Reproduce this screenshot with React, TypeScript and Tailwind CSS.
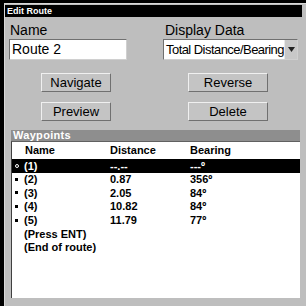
import React from 'react';

const rows = [
  { mark: 'o', name: '(1)', dist: '--.--', bear: '---º', sel: true },
  { mark: 'b', name: '(2)', dist: '0.87', bear: '356º' },
  { mark: 'b', name: '(3)', dist: '2.05', bear: '84º' },
  { mark: 'b', name: '(4)', dist: '10.82', bear: '84º' },
  { mark: 'b', name: '(5)', dist: '11.79', bear: '77º' },
  { mark: '', name: '(Press ENT)', dist: '', bear: '' },
  { mark: '', name: '(End of route)', dist: '', bear: '' },
];

const Btn = ({ label, w }: { label: string; w: string }) => (
  <div className={`${w} h-[19px] flex items-center justify-center bg-[#c4c4c4] border border-t-[#f0f0f0] border-l-[#f0f0f0] border-b-[#707070] border-r-[#707070] text-[13px] text-black`}>
    {label}
  </div>
);

export default function App() {
  return (
    <div className="w-[306px] h-[306px] bg-black pl-[4px] pt-[3px] overflow-hidden" style={{ fontFamily: '"Liberation Sans", Arial, sans-serif' }}>
      <div className="w-[302px] h-[303px] bg-[#bebebe] border-l border-t border-[#d8d8d8] flex flex-col">
        {/* title */}
        <div className="h-[12px] mt-[1px] mr-[4px] bg-black text-white text-[9px] font-bold leading-[12px] pl-[2px]">Edit Route</div>

        {/* name / display */}
        <div className="flex mt-[5px] pl-[4px]">
          <div className="flex flex-col w-[154px]">
            <div className="text-[14px] leading-[17px] pl-[1px]">Name</div>
            <div className="w-[118px] h-[21px] bg-white border border-[#707070] border-r-[#d0d0d0] border-b-[#d0d0d0] text-[14px] leading-[19px] pl-[2px]">Route 2</div>
          </div>
          <div className="flex flex-col">
            <div className="text-[14px] leading-[17px] pl-[2px]">Display Data</div>
            <div className="w-[135px] h-[21px] bg-white border border-[#707070] border-r-[#d0d0d0] border-b-[#d0d0d0] flex">
              <div className="flex-1 text-[13px] tracking-[-0.55px] leading-[19px] pl-[2px] whitespace-nowrap overflow-hidden">Total Distance/Bearing</div>
              <div className="w-[13px] h-[19px] bg-[#c8c8c8] border-l border-[#e8e8e8] flex items-center justify-center">
                <svg width="7" height="5" viewBox="0 0 7 5"><path d="M0 0h7L3.5 5z" fill="#222" /></svg>
              </div>
            </div>
          </div>
        </div>

        {/* buttons */}
        <div className="grid grid-cols-[70px_80px] gap-x-[77px] gap-y-[10px] mt-[13px] pl-[36px]">
          <Btn label="Navigate" w="w-[70px]" />
          <Btn label="Reverse" w="w-[80px]" />
          <Btn label="Preview" w="w-[70px]" />
          <Btn label="Delete" w="w-[80px]" />
        </div>

        {/* waypoints */}
        <div className="ml-[6px] mr-[6px] mt-[9px] flex-1 flex flex-col">
          <div className="h-[11px] bg-[#8e8e8e] text-white text-[11px] tracking-[0.3px] font-bold leading-[11px] pl-[2px]">Waypoints</div>
          <div className="flex-1 bg-white border-l border-[#404040] border-t border-t-[#606060] mb-[8px]">
            <div className="flex h-[17px] items-end text-[11px] font-bold pb-[1px]">
              <div className="w-[98px] pl-[13px]">Name</div>
              <div className="w-[80px]">Distance</div>
              <div>Bearing</div>
            </div>
            {rows.map((r, i) => (
              <div key={i} className={`flex h-[13.6px] items-center text-[11px] font-bold ${r.sel ? 'bg-black text-white' : 'text-black'}`}>
                <div className="w-[11px] pl-[3px] flex items-center">
                  {r.mark === 'o' && <div className="w-[4px] h-[4px] rounded-full border border-white" />}
                  {r.mark === 'b' && <div className="w-[3px] h-[3px] bg-black" />}
                </div>
                <div className="w-[87px] pl-[1px] whitespace-nowrap">{r.name}</div>
                <div className="w-[80px]">{r.dist}</div>
                <div>{r.bear}</div>
              </div>
            ))}
          </div>
        </div>
      </div>
    </div>
  );
}
